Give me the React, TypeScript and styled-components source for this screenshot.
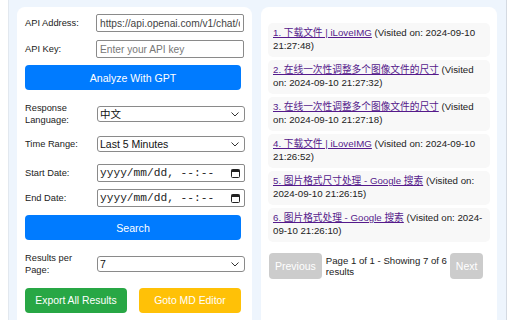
import styled, { createGlobalStyle } from 'styled-components';

type RowProps = {
  $mt: number;
};

type ActionProps = {
  $bg: string;
};

const history = [
  { title: '1. 下载文件 | iLoveIMG', time: '2024-09-10 21:27:48' },
  { title: '2. 在线一次性调整多个图像文件的尺寸', time: '2024-09-10 21:27:32' },
  { title: '3. 在线一次性调整多个图像文件的尺寸', time: '2024-09-10 21:27:18' },
  { title: '4. 下载文件 | iLoveIMG', time: '2024-09-10 21:26:52' },
  { title: '5. 图片格式尺寸处理 - Google 搜索', time: '2024-09-10 21:26:15' },
  { title: '6. 图片格式处理 - Google 搜索', time: '2024-09-10 21:26:10' },
];

function CalendarIcon() {
  return (
    <svg width="9" height="9" viewBox="0 0 9 9">
      <rect x="0.5" y="0.5" width="8" height="8" rx="1" fill="none" stroke="#222" />
      <rect x="0.5" y="0.5" width="8" height="2.5" fill="#222" />
    </svg>
  );
}

function DateField() {
  return (
    <DateBox>
      <DateText>yyyy/mm/dd, --:--</DateText>
      <CalendarIcon />
    </DateBox>
  );
}

function Dropdown({ options }: { options: string[] }) {
  return (
    <SelectWrap>
      <Select defaultValue={options[0]}>
        {options.map((o) => (
          <option key={o} value={o}>
            {o}
          </option>
        ))}
      </Select>
      <Chevron width="8" height="5" viewBox="0 0 8 5">
        <path d="M0.5 0.5 L4 4 L7.5 0.5" fill="none" stroke="#333" strokeWidth="1" />
      </Chevron>
    </SelectWrap>
  );
}

export default function App() {
  return (
    <>
      <GlobalStyle />
      <Page>
        <Card>
          <Row $mt={0}>
            <Label>API Address:</Label>
            <TextInput defaultValue="https://api.openai.com/v1/chat/completions" />
          </Row>
          <Row $mt={8}>
            <Label>API Key:</Label>
            <TextInput placeholder="Enter your API key" />
          </Row>
          <Row $mt={7}>
            <Action $bg="#007bff">Analyze With GPT</Action>
          </Row>
          <Row $mt={12}>
            <Label>Response Language:</Label>
            <Dropdown options={['中文', 'English']} />
          </Row>
          <Row $mt={10}>
            <Label>Time Range:</Label>
            <Dropdown options={['Last 5 Minutes', 'Last Hour', 'Last Day']} />
          </Row>
          <Row $mt={12}>
            <Label>Start Date:</Label>
            <DateField />
          </Row>
          <Row $mt={7}>
            <Label>End Date:</Label>
            <DateField />
          </Row>
          <Row $mt={8}>
            <Action $bg="#007bff">Search</Action>
          </Row>
          <Row $mt={12}>
            <Label>Results per Page:</Label>
            <Dropdown options={['7', '10', '20']} />
          </Row>
          <ButtonRow>
            <SmallAction $bg="#28a745">Export All Results</SmallAction>
            <SmallAction $bg="#ffc107">Goto MD Editor</SmallAction>
          </ButtonRow>
        </Card>
        <ResultsCard>
          <List>
            {history.map((item) => (
              <Item key={item.title}>
                <ItemLink href="#">{item.title}</ItemLink> (Visited on: {item.time})
              </Item>
            ))}
          </List>
          <Pager>
            <PageButton>Previous</PageButton>
            <PageInfo>Page 1 of 1 - Showing 7 of 6 results</PageInfo>
            <PageButton>Next</PageButton>
          </Pager>
        </ResultsCard>
      </Page>
    </>
  );
}

const GlobalStyle = createGlobalStyle`
  body {
    margin: 0;
    background: #ffffff;
    font-family: "Liberation Sans", Arial, "Noto Sans CJK SC", sans-serif;
    overflow: hidden;
  }
`;

const Page = styled.div`
  box-sizing: border-box;
  margin-left: 8px;
  width: 499px;
  height: 320px;
  overflow: hidden;
  display: flex;
  gap: 9px;
  padding: 7px 9px 0 8px;
  background: #eef5fd;
  border-left: 1px solid #e2e8ef;
  border-right: 1px solid #d4dae2;
`;

const Card = styled.div`
  box-sizing: border-box;
  width: 235px;
  height: 323px;
  flex-shrink: 0;
  padding: 7px 7px 0 8px;
  background: #ffffff;
  border-radius: 8px;
`;

const ResultsCard = styled(Card)`
  width: 236px;
  padding: 16px 7px 0 7px;
`;

const Row = styled.div<RowProps>`
  display: flex;
  align-items: center;
  margin-top: ${(props) => props.$mt}px;
`;

const Label = styled.label`
  box-sizing: border-box;
  width: 71px;
  flex-shrink: 0;
  padding-right: 4px;
  font-size: 9.3px;
  line-height: 12px;
  color: #222;
`;

const TextInput = styled.input`
  box-sizing: border-box;
  width: 148px;
  height: 18px;
  margin: 0;
  padding: 0 3px;
  border: 1px solid #8a8a8a;
  border-radius: 2px;
  font-family: "Liberation Sans", Arial, sans-serif;
  font-size: 10.2px;
  color: #444;
  &::placeholder {
    color: #777;
  }
`;

const SelectWrap = styled.div`
  position: relative;
  margin-left: 1px;
  display: flex;
`;

const Select = styled.select`
  box-sizing: border-box;
  width: 148px;
  height: 16px;
  margin: 0;
  padding: 0 0 0 2px;
  border: 1px solid #8a8a8a;
  border-radius: 3px;
  background: #fff;
  appearance: none;
  font-family: "Liberation Sans", Arial, "Noto Sans CJK SC", sans-serif;
  font-size: 10.5px;
  line-height: 14px;
  color: #111;
`;

const Chevron = styled.svg`
  position: absolute;
  right: 6px;
  top: 6px;
  pointer-events: none;
`;

const DateBox = styled.div`
  box-sizing: border-box;
  width: 148px;
  height: 18px;
  margin-left: 1px;
  display: flex;
  align-items: center;
  justify-content: space-between;
  padding: 0 4px 0 2px;
  border: 1px solid #8a8a8a;
  border-radius: 2px;
`;

const DateText = styled.span`
  font-family: "Liberation Mono", "Courier New", monospace;
  font-size: 11.2px;
  color: #222;
`;

const Action = styled.button<ActionProps>`
  width: 216px;
  height: 25px;
  border: none;
  border-radius: 4px;
  background: ${(props) => props.$bg};
  color: #ffffff;
  font-family: "Liberation Sans", Arial, sans-serif;
  font-size: 10.6px;
  padding: 0;
`;

const ButtonRow = styled.div`
  display: flex;
  gap: 12px;
  margin-top: 12px;
`;

const SmallAction = styled(Action)`
  width: 102px;
  font-size: 10.4px;
`;

const List = styled.div`
  display: flex;
  flex-direction: column;
  gap: 3px;
`;

const Item = styled.div`
  box-sizing: border-box;
  min-height: 34px;
  padding: 4px 5px;
  background: #f8f8f8;
  border-radius: 5px;
  font-size: 9.7px;
  line-height: 12.7px;
  color: #222;
`;

const ItemLink = styled.a`
  color: #551a8b;
  text-decoration: underline;
`;

const Pager = styled.div`
  display: flex;
  align-items: center;
  gap: 4px;
  margin-top: 11px;
  padding-left: 1px;
`;

const PageButton = styled.button`
  height: 26px;
  padding: 0 6px;
  border: none;
  border-radius: 4px;
  background: #cccccc;
  color: #ffffff;
  font-family: "Liberation Sans", Arial, sans-serif;
  font-size: 10.5px;
`;

const PageInfo = styled.span`
  width: 123px;
  margin-right: -3px;
  font-size: 9.6px;
  line-height: 11.3px;
  color: #222;
`;
